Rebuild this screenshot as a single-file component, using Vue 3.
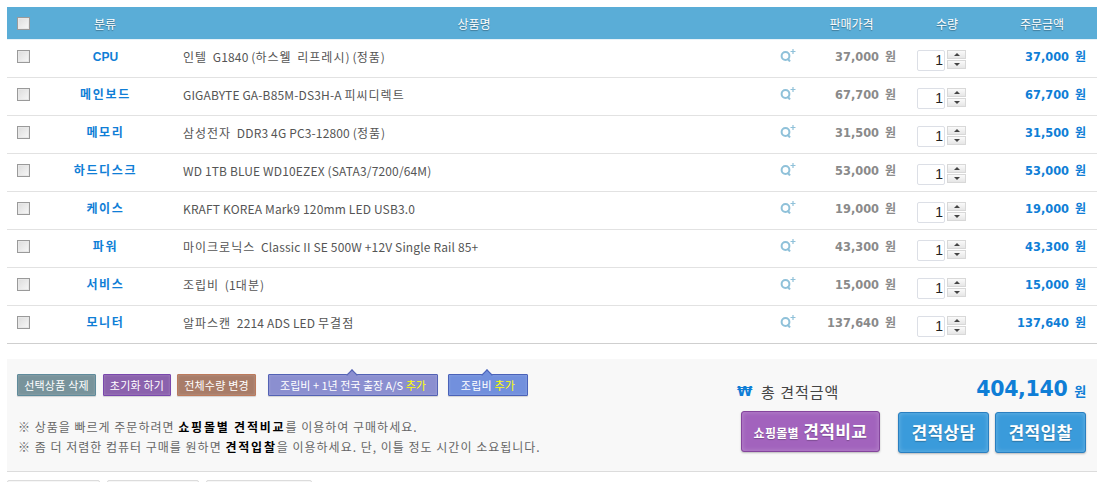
<template>
  <div class="page">
    <div class="cart-head">
      <span class="cell-check"><input type="checkbox" class="check" /></span>
      <span class="head-cat">분류</span>
      <span class="head-name">상품명</span>
      <span></span>
      <span class="head-price">판매가격</span>
      <span class="head-qty">수량</span>
      <span class="head-total">주문금액</span>
    </div>

    <div v-for="item in items" :key="item.cat" class="cart-row">
      <span class="cell-check"><input type="checkbox" class="check" /></span>
      <span class="cat" :class="{ latin: item.cat === 'CPU' }">{{ item.cat }}</span>
      <span class="name"><span v-for="(run, i) in runs(item.name)" :key="i" :class="{ ko: isKo(run) }">{{ run }}</span></span>
      <span class="zoom">
        <svg width="16" height="13" viewBox="0 0 16 13">
          <circle cx="5.5" cy="7" r="3.9" fill="none" stroke="#8fc1d9" stroke-width="2" />
          <path d="M7.5 9.5 L10 12.5" stroke="#8fc1d9" stroke-width="2" />
          <path d="M10.5 2.5 H15.5 M13 0 V5" stroke="#8fc1d9" stroke-width="1.2" />
        </svg>
      </span>
      <span class="price">{{ won(item.price) }} <em>원</em></span>
      <span class="qty">
        <input class="qty-input" type="text" value="1" />
        <span class="spin">
          <span class="spin-btn"><i class="up"></i></span>
          <span class="spin-btn"><i class="down"></i></span>
        </span>
      </span>
      <span class="total">{{ won(item.price) }} <em>원</em></span>
    </div>

    <div class="summary">
      <div class="summary-left">
        <div class="actions">
          <button class="btn teal">선택상품 삭제</button>
          <button class="btn purple">초기화 하기</button>
          <button class="btn brown">전체수량 변경</button>
          <button class="btn tip periwinkle">조립비 + 1년 전국 출장 A/S <b>추가</b></button>
          <button class="btn tip blue">조립비 <b>추가</b></button>
        </div>
        <p class="note first">※ 상품을 빠르게 주문하려면 <strong>쇼핑몰별 견적비교</strong>를 이용하여 구매하세요.</p>
        <p class="note">※ 좀 더 저렴한 컴퓨터 구매를 원하면 <strong>견적입찰</strong>을 이용하세요. 단, 이틀 정도 시간이 소요됩니다.</p>
      </div>
      <div class="summary-right">
        <div class="grand">
          <span class="won-sign">₩</span>
          <span class="grand-label">총 견적금액</span>
          <span class="grand-value">404,140 <em>원</em></span>
        </div>
        <div class="big-actions">
          <button class="big compare"><small>쇼핑몰별</small> 견적비교</button>
          <button class="big sky first-sky">견적상담</button>
          <button class="big sky">견적입찰</button>
        </div>
      </div>
    </div>

    <div class="tabs">
      <span class="tab t1"></span>
      <span class="tab t2"></span>
      <span class="tab t3"></span>
    </div>
  </div>
</template>

<script setup>
const items = [
  { cat: 'CPU', name: '인텔 G1840 (하스웰 리프레시) (정품)', price: 37000 },
  { cat: '메인보드', name: 'GIGABYTE GA-B85M-DS3H-A 피씨디렉트', price: 67700 },
  { cat: '메모리', name: '삼성전자 DDR3 4G PC3-12800 (정품)', price: 31500 },
  { cat: '하드디스크', name: 'WD 1TB BLUE WD10EZEX (SATA3/7200/64M)', price: 53000 },
  { cat: '케이스', name: 'KRAFT KOREA Mark9 120mm LED USB3.0', price: 19000 },
  { cat: '파워', name: '마이크로닉스 Classic II SE 500W +12V Single Rail 85+', price: 43300 },
  { cat: '서비스', name: '조립비 (1대분)', price: 15000 },
  { cat: '모니터', name: '알파스캔 2214 ADS LED 무결점', price: 137640 },
]

const won = (n) => n.toLocaleString('en-US')

// hangul is set wider than latin in the product names
const runs = (text) => text.split(/([가-힣][가-힣 ]*)/).filter(Boolean)
const isKo = (run) => /[가-힣]/.test(run)
</script>

<style>
html, body {
  margin: 0;
  overflow: hidden;
  background: #fff;
}
</style>

<style scoped>
.page {
  width: 1090px;
  height: 482px;
  padding: 7px 7px 0;
  overflow: hidden;
  font-family: "Noto Sans CJK KR", "Noto Sans", sans-serif;
  font-size: 12px;
  color: #555;
}
.cart-head,
.cart-row {
  display: grid;
  grid-template-columns: 32px 133px 600px 28px 107px 68px 122px;
  align-items: center;
}
.cart-head {
  height: 32px;
  background: #5aadd7;
  border-bottom: 1px solid #e6f2f8;
  color: #fff;
  text-shadow: 0 1px 1px rgba(0, 0, 0, 0.35);
  text-align: center;
}
.head-cat { padding-right: 1px; }
.head-name { padding-left: 4px; }
.head-price { padding-right: 4px; }
.head-qty { padding-left: 12px; }
.head-total { padding-left: 12px; }
.cell-check {
  display: flex;
  justify-content: center;
}
.check {
  appearance: none;
  width: 13px;
  height: 13px;
  margin: 0;
  border: 1px solid #9a9a9a;
  background: linear-gradient(135deg, #dcdcdc, #f8f8f8);
  box-shadow: inset 0 0 0 1px #e8e8e8;
}
.cart-row {
  height: 32px;
  padding-bottom: 5px;
  border-bottom: 1px solid #e2e2e2;
}
.cart-row:nth-of-type(9) {
  border-bottom-color: #cfcfcf;
}
.cat {
  margin-bottom: 2px;
  text-align: center;
  color: #0f7ed6;
  font-weight: 700;
  letter-spacing: 1.7px;
}
.cat.latin {
  margin: 2px 0 0;
  font-family: "Liberation Sans", sans-serif;
  letter-spacing: 0;
}
.name {
  padding-left: 11px;
  letter-spacing: 0.15px;
  color: #555;
}
.ko {
  letter-spacing: 1px;
  word-spacing: 2px;
}
.zoom {
  padding-left: 8px;
  height: 18px;
  margin-top: 3px;
}
.zoom svg { display: block; }
.price,
.total {
  margin-bottom: 2px;
  text-align: right;
  padding-right: 11px;
  font-family: "DejaVu Sans", sans-serif;
  font-weight: 700;
  font-size: 11.4px;
}
.price { color: #8a8a8a; }
.total { color: #0f7ed6; }
.price em,
.total em {
  font-family: "Noto Sans CJK KR", sans-serif;
  font-style: normal;
  font-size: 12px;
  margin-left: 2px;
}
.qty {
  display: flex;
  padding-left: 10px;
  gap: 2px;
  margin-top: 9px;
}
.qty-input {
  box-sizing: border-box;
  width: 28px;
  height: 21px;
  padding: 0 1px 2px 0;
  border: 1px solid #dcdfe6;
  border-radius: 2px;
  text-align: right;
  font-family: "Liberation Sans", sans-serif;
  font-size: 14px;
  color: #222;
  background: #fff;
  outline: none;
}
.spin {
  display: flex;
  flex-direction: column;
  gap: 1px;
}
.spin-btn {
  box-sizing: border-box;
  width: 19px;
  height: 9px;
  border: 1px solid #d8d8d8;
  background: linear-gradient(#fafafa, #e6e6e6);
  display: flex;
  align-items: center;
  justify-content: center;
}
.up,
.down {
  width: 0;
  height: 0;
  border-left: 3px solid transparent;
  border-right: 3px solid transparent;
}
.up { border-bottom: 3px solid #444; }
.down { border-top: 3px solid #444; }

.summary {
  display: flex;
  justify-content: space-between;
  box-sizing: border-box;
  height: 113px;
  margin-top: 15px;
  background: #f8f8f8;
  border-bottom: 1px solid #dcdcdc;
}
.summary-left {
  padding: 15px 0 0 10px;
}
.actions {
  display: flex;
  gap: 6px;
}
.btn {
  position: relative;
  box-sizing: border-box;
  height: 22px;
  padding: 0;
  border: 1px solid;
  border-radius: 1px;
  color: #fff;
  font: 11px "Noto Sans CJK KR", sans-serif;
  letter-spacing: 0.2px;
  line-height: 18px;
  white-space: nowrap;
  box-shadow: inset 0 0 3px rgba(255, 255, 255, 0.2), 0 1px 1px rgba(0, 0, 0, 0.15);
}
.btn b {
  font-weight: 400;
  color: #ffff00;
}
.teal { width: 79px; background: #78939b; border-color: #5f8b9b; }
.purple { width: 68px; margin-left: 1px; background: #8b62ad; border-color: #7a48ad; }
.brown { width: 79px; background: #a87c68; border-color: #bc7a5c; }
.periwinkle { width: 170px; margin-left: 6px; background: #8b8fd0; border-color: #5362b4; letter-spacing: 0; }
.blue { width: 80px; margin-left: 4px; background: #7290dd; border-color: #4a62b8; }
.tip::before {
  content: "";
  position: absolute;
  top: -4px;
  left: calc(50% - 5px);
  width: 7px;
  height: 7px;
  background: inherit;
  border-top: 1px solid;
  border-left: 1px solid;
  border-color: inherit;
  transform: rotate(45deg);
}
.note {
  margin: 0 0 0 1px;
  height: 20px;
  line-height: 20px;
  color: #666;
  letter-spacing: 1px;
}
.note.first { margin-top: 21px; }
.note strong {
  color: #000;
  font-weight: 700;
  letter-spacing: 1.8px;
}
.summary-right {
  width: 360px;
  padding-right: 11px;
  box-sizing: border-box;
}
.grand {
  display: flex;
  align-items: center;
  height: 28px;
  margin-top: 18px;
}
.won-sign {
  width: 24px;
  color: #0f7ed6;
  font: 700 14px "DejaVu Sans", sans-serif;
}
.grand-label {
  font-size: 15px;
  letter-spacing: 1px;
  color: #444;
}
.grand-value {
  margin-left: auto;
  margin-bottom: 4px;
  color: #0f7ed6;
  font: 700 20.5px "DejaVu Sans", sans-serif;
  letter-spacing: -0.3px;
}
.grand-value em {
  font: 700 13px "Noto Sans CJK KR", sans-serif;
}
.big-actions {
  display: flex;
  margin: 6px 0 0 4px;
}
.big {
  box-sizing: border-box;
  height: 41px;
  border: 1px solid;
  border-radius: 3px;
  color: #fff;
  font: 700 17px "Noto Sans CJK KR", sans-serif;
  letter-spacing: 0.4px;
  text-shadow: 0 1px 1px rgba(0, 0, 0, 0.25);
  box-shadow: inset 0 0 5px rgba(255, 255, 255, 0.25), 0 1px 2px rgba(0, 0, 0, 0.25);
  padding: 0 0 3px;
}
.big small {
  font-size: 12px;
  letter-spacing: 0.3px;
}
.compare {
  width: 139px;
  background: #a263bd;
  border-color: #84459c;
}
.sky {
  width: 91px;
  margin: 1px 0 0 6px;
  background: #3a9bdb;
  border-color: #2a7fc0;
}
.first-sky { margin-left: 18px; }
.tabs {
  display: flex;
  gap: 7px;
  margin-top: 8px;
}
.tab {
  box-sizing: border-box;
  height: 24px;
  border: 1px solid #dcdcdc;
  border-radius: 2px;
  background: #f6f6f6;
}
.t1 { width: 93px; }
.t2 { width: 92px; }
.t3 { width: 106px; }
</style>
